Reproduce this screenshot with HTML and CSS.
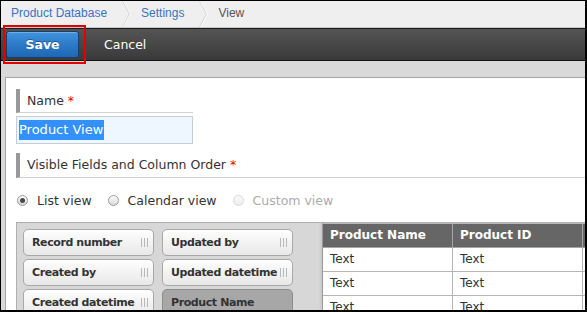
FILE: index.html
```html
<!DOCTYPE html>
<html>
<head>
<meta charset="utf-8">
<link rel="stylesheet" href="styles.css">
</head>
<body>
<div class="frame">
  <nav class="crumbs">
    <a class="crumb link first">Product Database</a>
    <svg class="sep" width="9" height="26" viewBox="0 0 9 26"><polyline points="0.5,0 7.5,13 0.5,26" fill="none" stroke="#d2d2d2" stroke-width="1"/><polyline points="1.5,0 8.5,13 1.5,26" fill="none" stroke="#fafafa" stroke-width="1"/></svg>
    <a class="crumb link">Settings</a>
    <svg class="sep" width="9" height="26" viewBox="0 0 9 26"><polyline points="0.5,0 7.5,13 0.5,26" fill="none" stroke="#d2d2d2" stroke-width="1"/><polyline points="1.5,0 8.5,13 1.5,26" fill="none" stroke="#fafafa" stroke-width="1"/></svg>
    <span class="crumb current">View</span>
  </nav>
  <div class="toolbar">
    <button class="btn-save">Save</button>
    <button class="btn-cancel">Cancel</button>
  </div>
  <div class="main">
    <div class="panel">
      <div class="label label-short">Name <span class="req">*</span></div>
      <div class="input"><span class="sel">Product View</span></div>
      <div class="label label-wide">Visible Fields and Column Order <span class="req">*</span></div>
      <div class="views">
        <span class="opt"><span class="radio checked"></span>List view</span>
        <span class="opt"><span class="radio"></span>Calendar view</span>
        <span class="opt disabled"><span class="radio"></span>Custom view</span>
      </div>
      <div class="fields">
        <div class="chips">
          <div class="chip"><span>Record number</span><span class="grip"></span></div>
          <div class="chip"><span>Updated by</span><span class="grip"></span></div>
          <div class="chip"><span>Created by</span><span class="grip"></span></div>
          <div class="chip"><span>Updated datetime</span><span class="grip"></span></div>
          <div class="chip"><span>Created datetime</span><span class="grip"></span></div>
          <div class="chip used"><span>Product Name</span></div>
        </div>
        <div class="table">
          <div class="cell head">Product Name</div>
          <div class="cell head">Product ID</div>
          <div class="cell head"></div>
          <div class="cell">Text</div>
          <div class="cell">Text</div>
          <div class="cell"></div>
          <div class="cell">Text</div>
          <div class="cell">Text</div>
          <div class="cell"></div>
          <div class="cell">Text</div>
          <div class="cell">Text</div>
          <div class="cell"></div>
        </div>
      </div>
    </div>
  </div>
  <div class="highlight"></div>
</div>
</body>
</html>
```

FILE: styles.css
```css
html, body {
  margin: 0;
  padding: 0;
  background: #fff;
}

.frame {
  position: relative;
  width: 587px;
  height: 312px;
  box-sizing: border-box;
  border-style: solid;
  border-color: #000;
  border-width: 1px 2px 2px 1px;
  overflow: hidden;
  display: flex;
  flex-direction: column;
  font-family: "DejaVu Sans", Verdana, sans-serif;
  color: #333;
}

/* breadcrumb */
.crumbs {
  flex: 0 0 auto;
  height: 26px;
  background: #efefef;
  border-bottom: 1px solid #c8c8c8;
  display: flex;
  align-items: stretch;
  font-family: "Liberation Sans", Arial, sans-serif;
  font-size: 12px;
  line-height: 24px;
}
.crumb { white-space: nowrap; }
.crumb.first { padding-left: 10px; }
.crumb.link { color: #3d72bd; margin-right: 15px; }
.crumb.current { color: #555; }
.sep { flex: 0 0 auto; display: block; margin-right: 10px; }

/* toolbar */
.toolbar {
  flex: 0 0 auto;
  height: 31px;
  border-top: 1px solid #1a1a1a;
  border-bottom: 1px solid #111;
  background: linear-gradient(#545454, #3a3a3a);
  display: flex;
  align-items: center;
  padding-left: 5px;
}
.btn-save {
  width: 73px;
  height: 27px;
  box-sizing: border-box;
  margin: 0;
  padding: 0;
  border: 1px solid #163f6e;
  border-radius: 3px;
  background: linear-gradient(#4193df, #2a78c6 55%, #1f68b3);
  box-shadow: inset 0 1px 0 rgba(255,255,255,0.25);
  color: #fff;
  font-family: "DejaVu Sans", Verdana, sans-serif;
  font-weight: bold;
  font-size: 12.5px;
  text-shadow: 0 -1px 0 rgba(0,0,0,0.35);
}
.btn-cancel {
  margin: 0 0 0 25px;
  padding: 0;
  border: none;
  background: none;
  color: #fff;
  font-family: "DejaVu Sans", Verdana, sans-serif;
  font-size: 12.5px;
}

/* main */
.main {
  flex: 1 1 auto;
  min-height: 0;
  background: #d9d9d9;
  padding: 16px 0 0 4px;
  display: flex;
}
.panel {
  flex: 1 1 auto;
  min-width: 0;
  background: #fff;
  border-top: 1px solid #a6a6a6;
  border-left: 1px solid #a6a6a6;
  padding: 11px 0 0 10px;
  display: flex;
  flex-direction: column;
}
.panel > * { flex-shrink: 0; }

.label {
  box-sizing: border-box;
  border-left: 4px solid #999;
  border-bottom: 1px solid #d2d2d2;
  padding-left: 7px;
  font-size: 12.5px;
  color: #333;
  white-space: nowrap;
}
.label-short { width: 177px; height: 24px; line-height: 23px; }
.label-wide { height: 25px; line-height: 24px; margin-top: 9px; }
.req { color: #e60000; }

.input {
  margin-top: 3px;
  width: 177px;
  height: 28px;
  box-sizing: border-box;
  border: 1px solid #c5ced6;
  background: #eef6ff;
  padding: 0 2px;
  display: flex;
  align-items: center;
}
.sel {
  background: #3391ff;
  color: #fff;
  font-size: 13px;
  line-height: 20px;
  padding-right: 1px;
  white-space: nowrap;
}

.views {
  margin-top: 13px;
  height: 18px;
  display: flex;
  align-items: center;
  padding-left: 1px;
  font-size: 12.5px;
  color: #333;
}
.opt {
  display: flex;
  align-items: center;
  margin-right: 16px;
  white-space: nowrap;
}
.opt.disabled { color: #ababab; }
.radio {
  position: relative;
  width: 11px;
  height: 11px;
  box-sizing: border-box;
  border-radius: 50%;
  border: 1px solid #9c9c9c;
  background: linear-gradient(#fdfdfd, #d8d8d8);
  margin-right: 9px;
}
.radio.checked::after {
  content: "";
  position: absolute;
  left: 2px;
  top: 2px;
  width: 5px;
  height: 5px;
  border-radius: 50%;
  background: #4a4a4a;
}
.opt.disabled .radio {
  border-color: #d8d8d8;
  background: linear-gradient(#fafafa, #eeeeee);
}

/* fields */
.panel > .fields {
  margin-top: 13px;
  flex: 1 1 auto;
  min-height: 0;
  border-top: 1px solid #b0b0b0;
  border-left: 1px solid #b0b0b0;
  background: #d7d7d7;
  display: flex;
  align-items: flex-start;
  overflow: hidden;
}
.chips {
  flex: 0 0 auto;
  display: grid;
  grid-template-columns: 131px 131px;
  column-gap: 8px;
  row-gap: 3px;
  margin: 6px 0 0 6px;
}
.chip {
  height: 27px;
  box-sizing: border-box;
  border: 1px solid #a8a8a8;
  border-radius: 5px;
  background: linear-gradient(#fefefe, #e8e8e8);
  display: flex;
  align-items: center;
  justify-content: space-between;
  padding: 0 5px 0 8px;
  font-weight: bold;
  font-size: 11px;
  letter-spacing: -0.4px;
  color: #333;
  white-space: nowrap;
}
.chip.used {
  background: #a7a7a7;
  border-color: #8d8d8d;
}
.grip {
  flex: 0 0 auto;
  width: 7px;
  height: 9px;
  background: linear-gradient(to right, #b8b8b8 1px, transparent 1px);
  background-size: 3px 100%;
}

.table {
  flex: 0 0 auto;
  margin-left: 29px;
  display: grid;
  grid-template-columns: 130px 130px 130px;
  border-top: 1px solid #b8b8b8;
  border-left: 1px solid #999;
  box-shadow: -2px 0 2px rgba(0,0,0,0.06);
}
.cell {
  height: 24px;
  box-sizing: border-box;
  border-right: 1px solid #b5b5b5;
  border-bottom: 1px solid #b5b5b5;
  background: #fff;
  padding-left: 7px;
  font-size: 12px;
  line-height: 23px;
  color: #333;
  white-space: nowrap;
}
.cell.head {
  background: #666;
  color: #fff;
  font-weight: bold;
  border-right-color: #a5a5a5;
  border-bottom-color: #a5a5a5;
}

/* annotation overlay */
.highlight {
  position: absolute;
  left: 2px;
  top: 24px;
  width: 83px;
  height: 39px;
  box-sizing: border-box;
  border: 2px solid #e00000;
  pointer-events: none;
}
```
